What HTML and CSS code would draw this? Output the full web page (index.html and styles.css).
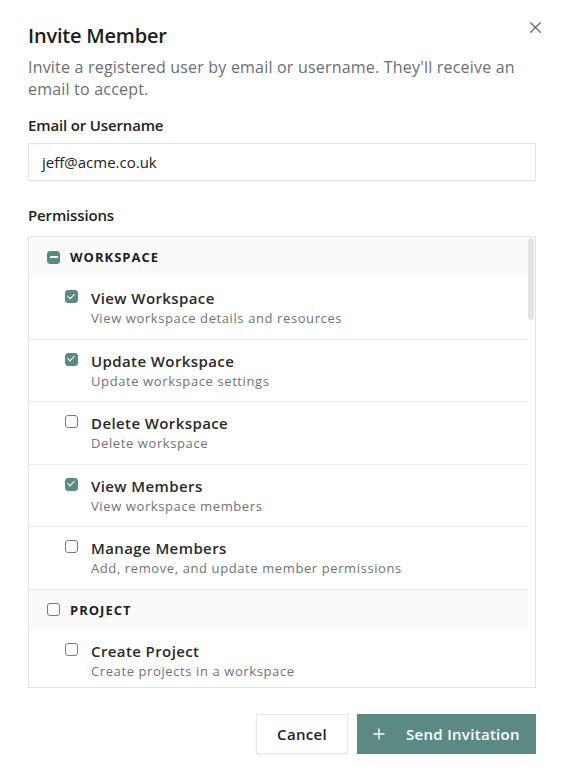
FILE: index.html
```html
<!DOCTYPE html>
<html lang="en">
<head>
<meta charset="utf-8">
<title>Invite Member</title>
<link rel="stylesheet" href="styles.css">
</head>
<body>
<div class="modal">
  <button class="close" aria-label="Close">
    <svg width="11" height="11" viewBox="0 0 11 11"><path d="M0.7 0.7L10.3 10.3M10.3 0.7L0.7 10.3" stroke="#6b6b6b" stroke-width="1.3" fill="none" stroke-linecap="round"/></svg>
  </button>
  <h1 class="title">Invite Member</h1>
  <p class="desc">Invite a registered user by email or username. They'll receive an email to accept.</p>

  <label class="label">Email or Username</label>
  <div class="input">jeff@acme.co.uk</div>

  <div class="label perm-label">Permissions</div>
  <div class="perm-box">
    <div class="perm-list">
      <div class="group">
        <span class="cb indeterminate"></span>
        <span class="group-name">WORKSPACE</span>
      </div>
      <div class="item">
        <span class="cb checked"></span>
        <div class="item-text"><div class="item-title">View Workspace</div><div class="item-desc">View workspace details and resources</div></div>
      </div>
      <div class="item">
        <span class="cb checked"></span>
        <div class="item-text"><div class="item-title">Update Workspace</div><div class="item-desc">Update workspace settings</div></div>
      </div>
      <div class="item">
        <span class="cb"></span>
        <div class="item-text"><div class="item-title">Delete Workspace</div><div class="item-desc">Delete workspace</div></div>
      </div>
      <div class="item">
        <span class="cb checked"></span>
        <div class="item-text"><div class="item-title">View Members</div><div class="item-desc">View workspace members</div></div>
      </div>
      <div class="item">
        <span class="cb"></span>
        <div class="item-text"><div class="item-title">Manage Members</div><div class="item-desc">Add, remove, and update member permissions</div></div>
      </div>
      <div class="group">
        <span class="cb"></span>
        <span class="group-name">PROJECT</span>
      </div>
      <div class="item">
        <span class="cb"></span>
        <div class="item-text"><div class="item-title">Create Project</div><div class="item-desc">Create projects in a workspace</div></div>
      </div>
    </div>
    <div class="scroll-thumb"></div>
  </div>

  <div class="actions">
    <button class="btn btn-secondary">Cancel</button>
    <button class="btn btn-primary">
      <svg width="12" height="12" viewBox="0 0 12 12"><path d="M6 0.5V11.5M0.5 6H11.5" stroke="#ffffff" stroke-width="1.4" fill="none"/></svg>
      <span>Send Invitation</span>
    </button>
  </div>
</div>
</body>
</html>
```

FILE: styles.css
```css
* { box-sizing: border-box; }
html, body { margin: 0; padding: 0; background: #ffffff; }
body {
  font-family: "Open Sans", "Noto Sans", "DejaVu Sans", sans-serif;
  color: #222222;
  width: 564px;
  height: 782px;
  overflow: hidden;
}
.modal {
  position: relative;
  padding: 22px 28px 0 28px;
}
.close {
  position: absolute;
  top: 21px;
  right: 22px;
  width: 13px;
  height: 13px;
  padding: 1px;
  border: 0;
  background: none;
  display: flex;
  align-items: center;
  justify-content: center;
}
.title {
  margin: 0;
  font-size: 20px;
  line-height: 28px;
  font-weight: 600;
  color: #1e1e1e;
  letter-spacing: -0.2px;
}
.desc {
  margin: 6px 0 0 0;
  font-size: 16px;
  line-height: 22px;
  color: #6b6e75;
  letter-spacing: 0.2px;
}
.label {
  display: block;
  margin-top: 14px;
  font-size: 15px;
  line-height: 22px;
  font-weight: 600;
  letter-spacing: -0.15px;
  color: #222222;
}
.input {
  margin-top: 7px;
  height: 38px;
  border: 1px solid #e3e3e3;
  padding: 0 13px;
  display: flex;
  align-items: center;
  font-size: 15px;
  color: #222222;
  box-shadow: 0 1px 1px rgba(0,0,0,0.03);
}
.perm-label { margin-top: 23px; }
.perm-box {
  position: relative;
  margin-top: 10px;
  height: 452px;
  border: 1px solid #e3e3e3;
  overflow: hidden;
}
.perm-list {
  margin-right: 7px;
}
.scroll-thumb {
  position: absolute;
  top: 1px;
  right: 1px;
  width: 6px;
  height: 82px;
  border-radius: 3px;
  background: #e4e4e4;
}
.group {
  height: 40px;
  background: #fafafa;
  display: flex;
  align-items: center;
  gap: 10px;
  padding-left: 18px;
}
.group-name {
  font-size: 13px;
  font-weight: 700;
  letter-spacing: 1px;
  color: #1e1e1e;
}
.item {
  display: flex;
  align-items: flex-start;
  gap: 13px;
  padding: 11px 0 10.5px 36px;
  border-bottom: 1px solid #ebebeb;
}
.item:last-child { border-bottom: 0; }
.item .cb { margin-top: 2px; }
.item-title {
  font-size: 15px;
  line-height: 20px;
  font-weight: 600;
  letter-spacing: 0.4px;
  color: #2a2a2a;
}
.item-desc {
  font-size: 13px;
  line-height: 20px;
  letter-spacing: 0.6px;
  color: #707279;
}
.cb {
  flex: none;
  position: relative;
  width: 13px;
  height: 13px;
  border: 1.5px solid #7a7a7a;
  border-radius: 3px;
  background: #ffffff;
}
.cb.checked, .cb.indeterminate {
  border-color: #5b8a85;
  background: #5b8a85;
}
.cb.checked::after {
  content: "";
  position: absolute;
  left: 3.2px;
  top: 0.6px;
  width: 3px;
  height: 6px;
  border-right: 1.8px solid #ffffff;
  border-bottom: 1.8px solid #ffffff;
  transform: rotate(45deg);
}
.cb.indeterminate::after {
  content: "";
  position: absolute;
  left: 1.5px;
  right: 1.5px;
  top: 4px;
  height: 2px;
  background: #ffffff;
}
.actions {
  margin-top: 26px;
  display: flex;
  justify-content: flex-end;
  gap: 9px;
}
.btn {
  height: 40px;
  font-family: inherit;
  font-size: 15px;
  font-weight: 600;
  letter-spacing: 0.3px;
  border-radius: 0;
  display: flex;
  align-items: center;
  cursor: pointer;
}
.btn-secondary {
  width: 92px;
  justify-content: center;
  background: #ffffff;
  color: #222222;
  border: 1px solid #e6e6e6;
  box-shadow: 0 1px 2px rgba(0,0,0,0.06);
}
.btn-primary {
  width: 179px;
  background: #5b8a85;
  color: #ffffff;
  border: 0;
  padding: 0 14px 0 16px;
  gap: 21px;
}
```
